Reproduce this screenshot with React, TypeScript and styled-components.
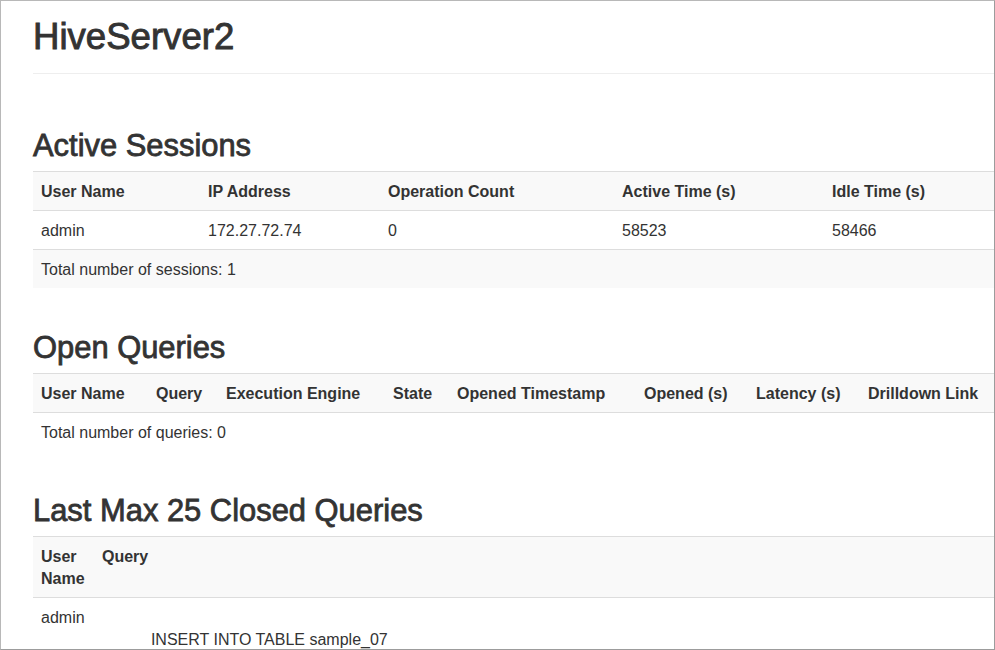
import styled, { createGlobalStyle } from "styled-components";

const GlobalStyle = createGlobalStyle`
  html,
  body {
    margin: 0;
    padding: 0;
    background: #ffffff;
  }
  body {
    font-family: "Liberation Sans", Arial, Helvetica, sans-serif;
    font-size: 16px;
    line-height: 22px;
    color: #333333;
  }
`;

const StyledFrame = styled.div`
  box-sizing: border-box;
  width: 995px;
  height: 650px;
  overflow: hidden;
  border: 1px solid #9c9c9c;
  border-left-color: #b8b8b8;
  border-top-color: #b8b8b8;
  background: #ffffff;
`;

const StyledContainer = styled.main`
  width: 970px;
  padding: 16px 0 0 32px;
`;

const StyledPageHeader = styled.header`
  padding-bottom: 16px;
  border-bottom: 1px solid #eeeeee;
  margin-bottom: 53px;
`;

const StyledTitle = styled.h1`
  margin: 0;
  font-size: 36.6px;
  line-height: 40px;
  font-weight: 500;
  -webkit-text-stroke: 0.9px #333333;
`;

const StyledSection = styled.section`
  & + & {
    margin-top: 41px;
  }
`;

const StyledSectionTitle = styled.h2`
  margin: 0 0 8.5px;
  padding-top: 1.5px;
  font-size: 30.9px;
  line-height: 34px;
  font-weight: 500;
  -webkit-text-stroke: 0.8px #333333;
`;

const StyledTable = styled.table`
  width: 100%;
  table-layout: fixed;
  border-collapse: collapse;
  border-spacing: 0;

  tr:nth-child(odd) {
    background-color: #f9f9f9;
  }
`;

const StyledHeadCell = styled.th`
  padding: 9px 8px 7px;
  border-top: 1px solid #dddddd;
  text-align: left;
  vertical-align: top;
  font-weight: bold;
`;

const StyledCell = styled.td`
  padding: 9px 8px 7px;
  border-top: 1px solid #dddddd;
  text-align: left;
  vertical-align: top;
`;

const StyledQueryText = styled.td`
  padding: 9px 8px 7px;
  border-top: 1px solid #dddddd;
  vertical-align: top;
  white-space: pre;
`;

type Column = { label: string; width: number };

const sessionColumns: Column[] = [
  { label: "User Name", width: 167 },
  { label: "IP Address", width: 180 },
  { label: "Operation Count", width: 234 },
  { label: "Active Time (s)", width: 210 },
  { label: "Idle Time (s)", width: 179 },
];

const sessions = [
  { user: "admin", ip: "172.27.72.74", ops: "0", active: "58523", idle: "58466" },
];

const openColumns: Column[] = [
  { label: "User Name", width: 115 },
  { label: "Query", width: 70 },
  { label: "Execution Engine", width: 167 },
  { label: "State", width: 64 },
  { label: "Opened Timestamp", width: 187 },
  { label: "Opened (s)", width: 112 },
  { label: "Latency (s)", width: 112 },
  { label: "Drilldown Link", width: 143 },
];

const closedColumns: Column[] = [
  { label: "User Name", width: 61 },
  { label: "Query", width: 909 },
];

const closedQueries = [
  { user: "admin", query: "\n" + " ".repeat(11) + "INSERT INTO TABLE sample_07" },
];

const Cols = ({ columns }: { columns: Column[] }) => (
  <colgroup>
    {columns.map((c) => (
      <col key={c.label} style={{ width: c.width }} />
    ))}
  </colgroup>
);

const HeadRow = ({ columns }: { columns: Column[] }) => (
  <tr>
    {columns.map((c) => (
      <StyledHeadCell key={c.label}>{c.label}</StyledHeadCell>
    ))}
  </tr>
);

const App = () => {
  return (
    <>
      <GlobalStyle />
      <StyledFrame>
        <StyledContainer>
          <StyledPageHeader>
            <StyledTitle>HiveServer2</StyledTitle>
          </StyledPageHeader>

          <StyledSection>
            <StyledSectionTitle>Active Sessions</StyledSectionTitle>
            <StyledTable>
              <Cols columns={sessionColumns} />
              <tbody>
                <HeadRow columns={sessionColumns} />
                {sessions.map((s) => (
                  <tr key={s.ip}>
                    <StyledCell>{s.user}</StyledCell>
                    <StyledCell>{s.ip}</StyledCell>
                    <StyledCell>{s.ops}</StyledCell>
                    <StyledCell>{s.active}</StyledCell>
                    <StyledCell>{s.idle}</StyledCell>
                  </tr>
                ))}
                <tr>
                  <StyledCell colSpan={sessionColumns.length}>
                    Total number of sessions: {sessions.length}
                  </StyledCell>
                </tr>
              </tbody>
            </StyledTable>
          </StyledSection>

          <StyledSection>
            <StyledSectionTitle>Open Queries</StyledSectionTitle>
            <StyledTable>
              <Cols columns={openColumns} />
              <tbody>
                <HeadRow columns={openColumns} />
                <tr>
                  <StyledCell colSpan={openColumns.length}>
                    Total number of queries: 0
                  </StyledCell>
                </tr>
              </tbody>
            </StyledTable>
          </StyledSection>

          <StyledSection>
            <StyledSectionTitle>Last Max 25 Closed Queries</StyledSectionTitle>
            <StyledTable>
              <Cols columns={closedColumns} />
              <tbody>
                <HeadRow columns={closedColumns} />
                {closedQueries.map((q, i) => (
                  <tr key={i}>
                    <StyledCell>{q.user}</StyledCell>
                    <StyledQueryText>{q.query}</StyledQueryText>
                  </tr>
                ))}
              </tbody>
            </StyledTable>
          </StyledSection>
        </StyledContainer>
      </StyledFrame>
    </>
  );
};

export default App;
